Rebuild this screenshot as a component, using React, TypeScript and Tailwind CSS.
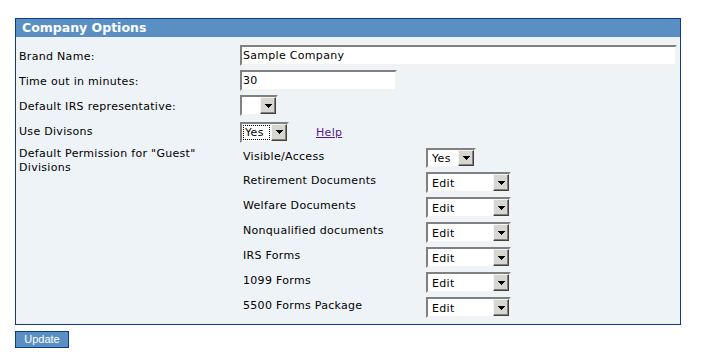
import React from "react";

function Caret() {
  return (
    <svg width="7" height="4" viewBox="0 0 7 4" shapeRendering="crispEdges">
      <path d="M0 0h7v1h-1v1h-1v1h-1v1h-1v-1h-1v-1h-1v-1h-1z" fill="#000" />
    </svg>
  );
}

function Select({
  w,
  h = "h-[21px]",
  value,
  focus = false,
}: {
  w: string;
  h?: string;
  value: string;
  focus?: boolean;
}) {
  return (
    <div
      className={`${w} ${h} flex shrink-0 border-2 border-t-[#808080] border-l-[#808080] border-b-[#f2f2f2] border-r-[#f2f2f2] bg-white`}
    >
      <div className="flex-1 flex items-stretch p-[1px] min-w-0">
        {focus ? (
          <div className="flex-1 flex items-center pl-[1px] pt-[1px] border border-dotted border-black text-[11px] leading-none text-black">
            {value}
          </div>
        ) : (
          <div className="flex-1 flex items-center pl-[3px] pt-[1px] text-[11px] leading-none text-black">
            {value}
          </div>
        )}
      </div>
      <div className="w-[16px] shrink-0 flex items-center justify-center bg-[#d8d6d0] border border-t-[#f4f4f4] border-l-[#f4f4f4] border-b-[#404040] border-r-[#404040] shadow-[inset_-1px_-1px_0_#808080]">
        <Caret />
      </div>
    </div>
  );
}

function TextInput({ w, value }: { w: string; value: string }) {
  return (
    <div
      className={`${w} h-[21px] flex items-center shrink-0 border-2 border-t-[#808080] border-l-[#808080] border-b-[#f2f2f2] border-r-[#f2f2f2] bg-white pl-[1px] text-[11px] leading-none text-black`}
    >
      {value}
    </div>
  );
}

const perms = [
  "Retirement Documents",
  "Welfare Documents",
  "Nonqualified documents",
  "IRS Forms",
  "1099 Forms",
  "5500 Forms Package",
];

export default function App() {
  return (
    <div className="w-[704px] h-[357px] bg-white font-['DejaVu_Sans',sans-serif] text-black overflow-hidden">
      <div className="ml-[15px] pt-[18px]">
        <div className="w-[666px] border border-[#0f3a8f] bg-[#eef3f7]">
          <div className="h-[18px] bg-[#5a8fc4] pl-[6px] flex items-center text-white font-bold text-[12.5px] leading-none">
            Company Options
          </div>
          <div className="pt-[7px] pb-[5px] tracking-[0.3px]">
            <div className="flex h-[25px]">
              <div className="w-[224px] pl-[3px] text-[11px] leading-[25px]">Brand Name:</div>
              <div className="mt-[1px]">
                <TextInput w="w-[437px]" value="Sample Company" />
              </div>
            </div>
            <div className="flex h-[25px]">
              <div className="w-[224px] pl-[3px] text-[11px] leading-[25px]">Time out in minutes:</div>
              <div className="mt-[1px]">
                <TextInput w="w-[157px]" value="30" />
              </div>
            </div>
            <div className="flex h-[25px]">
              <div className="w-[224px] pl-[3px] text-[11px] leading-[25px]">Default IRS representative:</div>
              <div className="mt-[1px]">
                <Select w="w-[38px]" value="" />
              </div>
            </div>
            <div className="flex h-[25px]">
              <div className="w-[224px] pl-[3px] text-[11px] leading-[25px]">Use Divisons</div>
              <div className="mt-[1px] flex items-center">
                <Select w="w-[49px]" value="Yes" focus />
                <a href="#" className="ml-[27px] text-[11px] leading-none text-[#551a8b] underline">
                  Help
                </a>
              </div>
            </div>
            <div className="flex mt-[1px]">
              <div className="w-[224px] pl-[3px] pt-[2px]">
                <div className="w-[205px] text-[11px] leading-[14px]">
                  Default Permission for "Guest" Divisions
                </div>
              </div>
              <div className="flex flex-col">
                <div className="flex h-[24px]">
                  <div className="w-[186px] pl-[3px] pt-[5px] text-[11px] leading-[14px]">Visible/Access</div>
                  <div className="mt-[3px]">
                    <Select w="w-[50px]" h="h-[20px]" value="Yes" />
                  </div>
                </div>
                {perms.map((p) => (
                  <div key={p} className="flex h-[25px]">
                    <div className="w-[186px] pl-[3px] pt-[5px] text-[11px] leading-[14px]">{p}</div>
                    <div className="mt-[3px]">
                      <Select w="w-[85px]" value="Edit" />
                    </div>
                  </div>
                ))}
              </div>
            </div>
          </div>
        </div>
        <div className="mt-[6px] w-[54px] h-[17px] bg-[#5a8fc4] border border-[#0f3a8f] flex items-center justify-center text-white text-[11px] leading-none font-['Liberation_Sans',Arial,sans-serif]">
          Update
        </div>
      </div>
    </div>
  );
}
